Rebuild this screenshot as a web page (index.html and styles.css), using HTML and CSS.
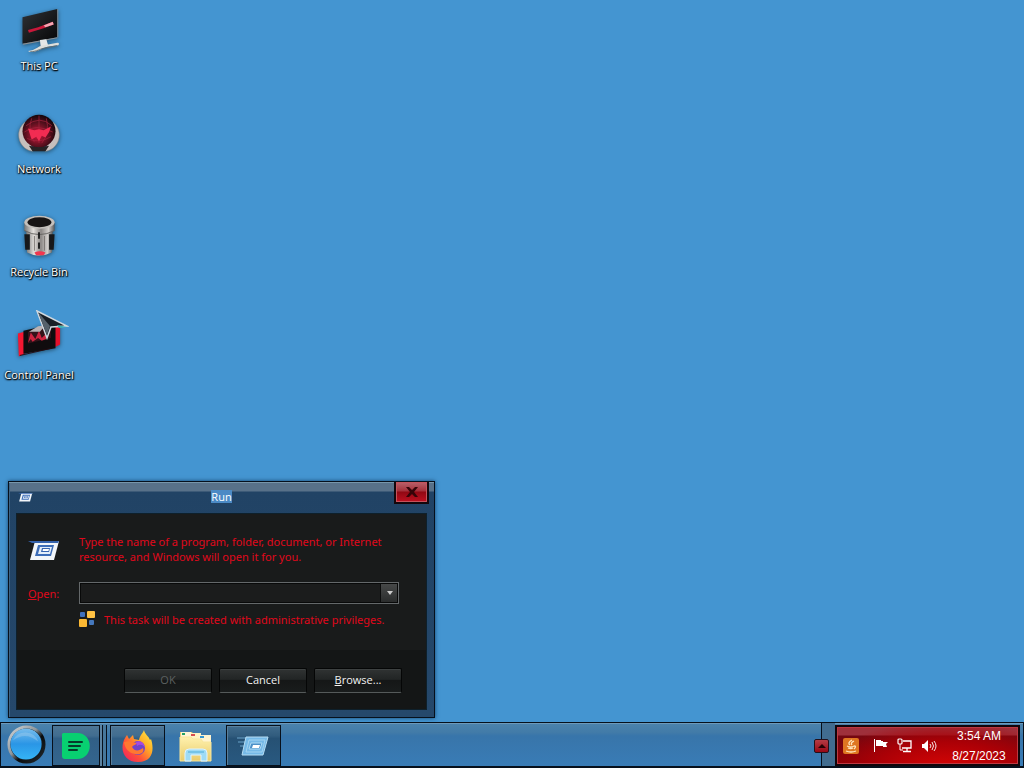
FILE: index.html
```html
<!DOCTYPE html>
<html lang="en">
<head>
<meta charset="utf-8">
<title>Desktop</title>
<link rel="stylesheet" href="styles.css">
</head>
<body>
<svg class="defs" aria-hidden="true">
  <defs>
    <linearGradient id="silver" x1="0" x2="1"><stop offset="0" stop-color="#777"/><stop offset=".3" stop-color="#e4e0dc"/><stop offset=".55" stop-color="#8b8785"/><stop offset=".8" stop-color="#d2cecb"/><stop offset="1" stop-color="#555"/></linearGradient>
    <linearGradient id="screen" x1="0" y1="0" x2="1" y2="1"><stop offset="0" stop-color="#303236"/><stop offset="1" stop-color="#050506"/></linearGradient>
    <radialGradient id="globe" cx=".45" cy=".6" r=".6"><stop offset="0" stop-color="#d8163e"/><stop offset=".5" stop-color="#6d1223"/><stop offset="1" stop-color="#14060a"/></radialGradient>
    <linearGradient id="ring" x1="0" y1="0" x2="1" y2="1"><stop offset="0" stop-color="#d4d6d8"/><stop offset=".42" stop-color="#8e969b"/><stop offset=".6" stop-color="#080a0c"/><stop offset="1" stop-color="#252c31"/></linearGradient>
    <linearGradient id="orb" x1="0" y1="0" x2="0" y2="1"><stop offset="0" stop-color="#78bdec"/><stop offset=".5" stop-color="#2a96e6"/><stop offset="1" stop-color="#35b4f6"/></linearGradient>
    <linearGradient id="fox" x1="1" y1="0" x2="0" y2="1"><stop offset="0" stop-color="#fff04c"/><stop offset=".35" stop-color="#ffb026"/><stop offset=".65" stop-color="#ff5038"/><stop offset="1" stop-color="#ed1a67"/></linearGradient>
    <linearGradient id="folder" x1="0" y1="0" x2="0" y2="1"><stop offset="0" stop-color="#fff1ae"/><stop offset="1" stop-color="#e8cb6a"/></linearGradient>
    <symbol id="run" viewBox="0 0 32 22">
      <path d="M7 2h24l-5 19H2z" fill="#f2f6fa"/><path d="M0 2h31l-1 2H4z" fill="#3462ac"/>
      <path d="M10 6h16l-3 11H7z" fill="#3c6db8"/><path d="M12 8h12l-2 7H10z" fill="#e3eefa"/><path d="M14 9h8l-1 4h-8z" fill="#3564b0"/><path d="M15 10h6l-.5 2h-6z" fill="#fff"/>
    </symbol>
  </defs>
</svg>

<main class="desktop">
  <ul class="shortcuts">
    <li><a class="shortcut" href="#pc">
      <svg viewBox="0 0 48 48"><path d="M6 10l38-9v31L6 39z" fill="url(#screen)"/><path d="M44 1l1 1v30h-1zM6 39l38-7v1L7 40z" fill="#8c8e91"/><path d="M12 24l11-3 16-6 1 3-11 4-16 5z" fill="#c9183a"/><path d="M29 19l10-4 1 3-9 3z" fill="#f3a7b3"/><path d="M25 35l7-1 2 7-8 2z" fill="#e5e7e6"/><path d="M12 47c9-1 10-5 16-6l16-3c3 0 2 3-1 3-7 1-10 1-15 3-5 3-8 4-14 4z" fill="#dedfdb"/><path d="M14 48c9-1 10-3 15-4l15-3" fill="none" stroke="#646c70"/></svg>
      <span>This PC</span></a></li>
    <li><a class="shortcut" href="#network">
      <svg viewBox="0 0 48 48"><path d="M9 12C-4 22 2 42 17 44l-3-14zM39 12c13 10 7 30-8 32l4-14z" fill="#c7bfbd" stroke="#8d8785" stroke-width=".6"/><circle cx="24" cy="22" r="18" fill="url(#globe)"/><path d="M13 38q11 3 22 0l-4 6H17z" fill="#262224"/><path d="M10 16q15-12 28 0M8 23q12-10 31 0M11 30q13 6 26-2M16 8q-5 14 3 26M32 8q4 16-5 27M24 5v30" fill="none" stroke="#a3243c" stroke-width=".8"/><path d="M12 19l7 2 5-1 5 1 8-4-2 6-4 6-4-2-3 6-3-5-5 3-2-6z" fill="#f22c52"/></svg>
      <span>Network</span></a></li>
    <li><a class="shortcut" href="#bin">
      <svg viewBox="0 0 48 48"><path d="M10 17l1 25q13 7 27 0l1-25z" fill="url(#silver)"/><path d="M8 22h6v17H9zM35 22h6l-1 17h-5z" fill="#17181a"/><path d="M8 9h33v9q-16 9-33 0z" fill="url(#silver)"/><ellipse cx="24.500" cy="9" rx="16.500" ry="7" fill="#c4c0bc"/><ellipse cx="24.500" cy="9" rx="13" ry="5.500" fill="#171414"/><path d="M8 18q16 9 33 0" fill="none" stroke="#656260"/><path d="M24 20v7M24 31v7" stroke="#1a1a1a" stroke-width="2"/><path d="M19 24v16M30 24v16" stroke="#797572"/><path d="M19 42q6-3 12 0l-2 3h-8z" fill="#f2364e"/></svg>
      <span>Recycle Bin</span></a></li>
    <li><a class="shortcut" href="#control">
      <svg viewBox="0 0 48 48"><g transform="translate(0 -4)"><path d="M1 22l7-2v24l-6 3z" fill="#f41732"/><path d="M41 13l6-1v22l-6 3z" fill="#e5102b"/><path d="M7 19l35-8v27L7 44z" fill="#100c0e"/><path d="M12 20l25-6v13l-25 6z" fill="#35131a"/><path d="M12 32l3-11 5 7 4-9 3 8 6-6-1 7-5 2-4-3-6 4-2-3z" fill="#cf2440"/><path d="M13 20l10-6 8-1-6 7z" fill="#b9b2b4"/><path d="M3 46l35-8" stroke="#250b10"/></g></svg>
      <span>Control Panel</span></a></li>
  </ul>
  <svg class="cursor" viewBox="0 0 34 30" aria-hidden="true"><path d="M2 1l30 15-16 1-4 11z" fill="#181e25" stroke="#d0d8df" stroke-width="1.500"/><path d="M3 2l12 14-3 9z" fill="#56616b"/><path d="M22 15l10 2-8 1z" fill="#36b4b2"/></svg>

  <section class="window" role="dialog" aria-labelledby="run-title">
    <header class="titlebar">
      <svg class="title-icon"><use href="#run"/></svg>
      <h1 id="run-title"><span>Run</span></h1>
      <button class="close" aria-label="Close"><svg viewBox="0 0 12 10"><path d="M0 0h3l3 3 3-3h3L8 5l4 5H9L6 7l-3 3H0l4-5z" fill="#350408"/></svg></button>
    </header>
    <form class="body">
      <div class="fields">
        <svg class="run-icon"><use href="#run"/></svg>
        <p>Type the name of a program, folder, document, or Internet<br>resource, and Windows will open it for you.</p>
        <label for="open"><u>O</u>pen:</label>
        <div class="combo">
          <input id="open" type="text" autocomplete="off">
          <button type="button" aria-label="Show history"><svg viewBox="0 0 6 4"><path d="M0 0h6L3 4z" fill="#ccc"/></svg></button>
        </div>
        <div class="notice">
          <svg viewBox="0 0 16 16"><rect x="1" y="1" width="5" height="5" rx="1" fill="#3f70bd"/><rect x="8" width="8" height="7" rx="1" fill="#ffc243"/><rect y="8" width="8" height="8" rx="1" fill="#fbb934"/><rect x="10" y="9" width="5" height="5" rx="1" fill="#4578bd"/></svg>
          <span>This task will be created with administrative privileges.</span>
        </div>
      </div>
      <div class="actions">
        <button type="button" disabled>OK</button>
        <button type="button">Cancel</button>
        <button type="button"><span><u>B</u>rowse...</span></button>
      </div>
    </form>
  </section>
</main>

<footer class="taskbar">
  <button class="start" aria-label="Start"><svg viewBox="0 0 40 40"><circle cx="20" cy="20" r="18" fill="#111a20" stroke="url(#ring)" stroke-width="3"/><circle cx="19.500" cy="19.500" r="16" fill="url(#orb)"/><path d="M6 16q13-10 26 1A14 14 0 0 0 6 16" fill="#a6d0ed" opacity=".4"/></svg></button>
  <button class="task stacked" aria-label="Notes"><svg viewBox="0 0 30 28"><path d="M2 1h14c17 0 17 26 0 26H4q-3 0-3-3V2z" fill="#08d071"/><path d="M8 10h13M8 14h11M8 18h8" stroke="#053c2b" stroke-width="2" stroke-linecap="round"/></svg></button>
  <button class="task" aria-label="Firefox"><svg class="fox" viewBox="0 0 32 32"><path d="M3 8l2-3 2 4 4-4 1 4 5 1c1-5 4-7 5-10 1 5 5 6 6 10l1-1c3 9 3 23-13 23C2 32-3 19 3 8z" fill="url(#fox)"/><circle cx="16" cy="18" r="7" fill="#7044c9"/><path d="M2 12c5-2 8 0 13 1-1 2-4 2-5 4 3 5 7 4 11 1 2 5-3 7-8 6-6-1-10-5-11-12z" fill="#ff7830"/><path d="M14 12q4-2 7 1l2 4q-4-4-8-1z" fill="#a64ae0"/></svg></button>
  <button class="task plain" aria-label="File Explorer"><svg class="explorer" viewBox="0 0 34 32"><path d="M1 2h12l2 3h16v26H1z" fill="#e9ca76"/><path d="M2 2h10v7H2z" fill="#fff6d5"/><path d="M12 3h10v7H12z" fill="#fff2c1"/><path d="M20 5h12v7H20z" fill="#fff4cf"/><path d="M3 3h3v2H3z" fill="#24a366"/><path d="M12 4h4v2h-4z" fill="#d74b50"/><path d="M21 6h4v2h-4z" fill="#3697d0"/><path d="M1 7h11l2 2h8l2 3h8v19H1z" fill="url(#folder)" stroke="#f8e69b"/><path d="M6 31v-8q0-4 4-4h14q4 0 4 4v8h-6v-6H12v6z" fill="#9edbf5" stroke="#e0f4ff"/><path d="M9 22h16" stroke="#4cacd9"/></svg></button>
  <button class="task active" aria-label="Run"><svg class="run-task" viewBox="0 0 34 22"><path d="M0 3h9M1 7h8M3 11h7" stroke="#6ba4ca"/><path d="M9 2h22l-5 18H5z" fill="#75b9e7" stroke="#b7def5"/><path d="M12 5h16l-3 12H9z" fill="none" stroke="#a4d4f1"/><path d="M14 8h11l-2 6H12z" fill="#4c91c8" stroke="#acd9f3"/><path d="M16 10h7l-1 3h-7z" fill="#fff"/></svg></button>
  <div class="tray-side"><button class="chevron" aria-label="Show hidden icons"><svg viewBox="0 0 8 4"><path d="M0 4l4-4 4 4z" fill="#260205"/></svg></button></div>
  <div class="tray">
    <button class="java" aria-label="Java"><svg viewBox="0 0 16 16"><rect width="16" height="16" rx="2" fill="#df7621"/><path d="M9 2q-5 3-2 5M11 3q-4 2-2 4M4 8q4 2 7 0M5 10q3 1 5 0M3 13q5 2 10 0M11 8q3 0 0 3" fill="none" stroke="#ffe5bd" stroke-width="1.300"/></svg></button>
    <button aria-label="Action Center"><svg viewBox="0 0 16 16"><path d="M1.500 1v13" stroke="#fff"/><path d="M3 2h5v1h2v1h5l-2 2 1 3h-4V8H3z" fill="#fff"/></svg></button>
    <button aria-label="Network"><svg viewBox="0 0 16 16"><path d="M6 3h8v7H5M10 10v3M6 13.500h8" fill="none" stroke="#fff" stroke-width="1.300"/><rect x="1" y="1" width="4" height="5" rx="1" fill="none" stroke="#fff" stroke-width="1.200"/><path d="M3 6v6h3" fill="none" stroke="#fff"/></svg></button>
    <button aria-label="Volume"><svg viewBox="0 0 16 16"><path d="M1 6h2l4-4v12l-4-4H1z" fill="#fff"/><path d="M9 6q2 2 0 4M11 4q3 4 0 8M13 3q4 5 0 10" fill="none" stroke="#fff" stroke-width=".9"/></svg></button>
    <time datetime="2023-08-27T03:54"><span>3:54 AM</span><span>8/27/2023</span></time>
  </div>
</footer>
</body>
</html>
```

FILE: styles.css
```css
* { box-sizing: border-box; }
body {
  display: flex;
  flex-direction: column;
  min-height: 100vh;
  margin: 0;
  overflow: hidden;
  background: #4495d1;
  font: 11px/15px "Open Sans", "Noto Sans", sans-serif;
}
button { padding: 0; font: inherit; color: inherit; background: none; border: 0; }
svg { display: block; flex: none; }
.defs { position: absolute; width: 0; height: 0; }

.desktop { position: relative; flex: 1; }
.shortcuts {
  display: flex;
  flex-direction: column;
  gap: 38px;
  width: 78px;
  margin: 0;
  padding: 8px 0 0;
  list-style: none;
}
.shortcut {
  display: flex;
  flex-direction: column;
  align-items: center;
  gap: 6px;
  color: #fff;
  text-decoration: none;
  white-space: nowrap;
  text-shadow: 1px 1px 1px #000, 0 1px 2px #000, 0 0 2px #000;
}
.shortcut svg { width: 44px; height: 44px; filter: drop-shadow(0 1px 2px #23516f); }
.cursor { position: absolute; left: 35px; top: 310px; width: 34px; height: 30px; }

.window {
  position: absolute;
  left: 8px;
  bottom: 4px;
  width: 427px;
  padding: 0 7px 7px;
  background: linear-gradient(#587189 0, #587189 9px, #214365 10px, #25486b 100%);
  border: 1px solid #06101c;
  box-shadow: 0 0 4px #16436a, inset 0 1px #7796ab, inset 1px 0 #3d6486;
}
.titlebar { display: grid; grid-template-columns: 35px 1fr 35px; height: 31px; }
.title-icon { width: 15px; height: 10px; margin: 10px 0 0 2px; }
.titlebar h1 {
  margin: 8px 0 0;
  color: #fff;
  font: inherit;
  line-height: 13px;
  text-align: center;
}
.titlebar h1 span { display: inline-block; background: #4b8ac5; }
.close {
  display: flex;
  align-items: center;
  justify-content: center;
  height: 22px;
  margin: 0 -2px 0 2px;
  background: linear-gradient(#b9636c, #a5303a 45%, #910813 50%, #bf1020);
  border: 2px solid #14070c;
  border-top: 0;
  box-shadow: inset 0 0 0 1px #c5525c;
}
.close svg { width: 12px; height: 10px; }

.body {
  color: #e0081b;
  background: #191b1b;
  border: 1px solid #0e202b;
}
.fields {
  display: grid;
  grid-template-columns: 51px 1fr;
  height: 136px;
  padding: 20px 27px 0 11px;
  align-content: start;
  font-family: "Noto Sans", "Open Sans", sans-serif;
}
.run-icon { width: 32px; height: 22px; margin-top: 5px; }
.fields p { margin: 0; white-space: nowrap; }
.fields label { align-self: center; margin-top: 18px; }
.combo {
  display: flex;
  height: 22px;
  margin-top: 18px;
  border: 1px solid #64686a;
  outline: 1px solid #080909;
  outline-offset: -2px;
}
.combo input {
  flex: 1;
  min-width: 0;
  padding: 0 4px;
  color: #eee;
  font: inherit;
  background: #1b1c1c;
  border: 1px solid #0b0c0c;
  outline: 0;
}
.combo button { display: grid; place-items: center; width: 17px; background: linear-gradient(#484a4a, #292b2b); }
.combo button svg { width: 6px; height: 4px; }
.notice { grid-column: 2; display: flex; align-items: center; gap: 9px; margin-top: 7px; white-space: nowrap; }
.notice svg { width: 16px; height: 16px; }
.actions {
  display: flex;
  justify-content: flex-end;
  gap: 7px;
  padding: 18px 24px 16px;
  color: #f2f2f2;
  background: #141616;
}
.actions button {
  width: 88px;
  height: 25px;
  padding-bottom: 3px;
  background: linear-gradient(#303333, #222525 45%, #151717 50%, #191c1c);
  border: 1px solid #050606;
  border-bottom-color: #555a5a;
  border-radius: 2px;
  box-shadow: inset 0 1px #3d4141;
}
.actions button:disabled { color: #5c6060; }

.taskbar {
  display: flex;
  height: 46px;
  background: linear-gradient(#4b83ad, #427ba8 22%, #3875aa 30%, #397cb6);
  border: 1px solid #06101c;
  border-bottom-width: 2px;
  box-shadow: inset 0 1px #6c9abb;
}
.start { display: grid; place-items: center; width: 51px; }
.start svg { width: 39px; height: 39px; }
.task {
  display: grid;
  place-items: center;
  width: 55px;
  height: 41px;
  margin: 2px 3px 0 0;
  background: linear-gradient(#4d7595, #416d90 25%, #315f86 32%, #34658e);
  border: 1px solid #07101b;
  box-shadow: inset 1px 1px #597f9c;
}
.stacked { width: 48px; margin-right: 10px; box-shadow: 2px 0 #5c83a2, 3px 0 #07101b, 6px 0 #47779b, 7px 0 #07101b; }
.stacked svg { width: 30px; height: 28px; }
.fox { width: 32px; height: 32px; }
.explorer { width: 34px; height: 32px; }
.run-task { width: 34px; height: 22px; }
.plain { background: none; border-color: transparent; box-shadow: none; }
.active { background: linear-gradient(#406b8c, #315c7e 25%, #265174 32%, #295980); }
.tray-side {
  display: flex;
  align-items: center;
  width: 21px;
  margin-left: auto;
  background: linear-gradient(90deg, transparent 7px, #06101c 7px, #06101c 8px, #416c8f 8px);
}
.chevron {
  display: grid;
  place-items: center;
  width: 15px;
  height: 14px;
  margin-top: 3px;
  background: linear-gradient(#b53c45, #980814);
  border: 1px solid #24101a;
  border-radius: 2px;
}
.chevron svg { width: 8px; height: 4px; }
.tray {
  display: flex;
  align-items: center;
  gap: 8px;
  height: 41px;
  margin: 2px 3px 0 0;
  padding: 0 10px 0 6px;
  color: #fff;
  background: radial-gradient(ellipse at 60% 110%, #d60505, #ab0006 45%, transparent 80%), linear-gradient(#9e303b 0, #9e303b 8px, #720711 9px, #870007);
  border: 2px solid #12050a;
  box-shadow: inset 0 0 0 1px #bd3841;
}
.tray svg { width: 16px; height: 16px; }
.java { margin-right: 6px; }
.tray time {
  display: flex;
  flex-direction: column;
  width: 58px;
  margin-left: 5px;
  font: 12px/20px "Liberation Sans", Arial, sans-serif;
  text-align: center;
  white-space: nowrap;
}
```
